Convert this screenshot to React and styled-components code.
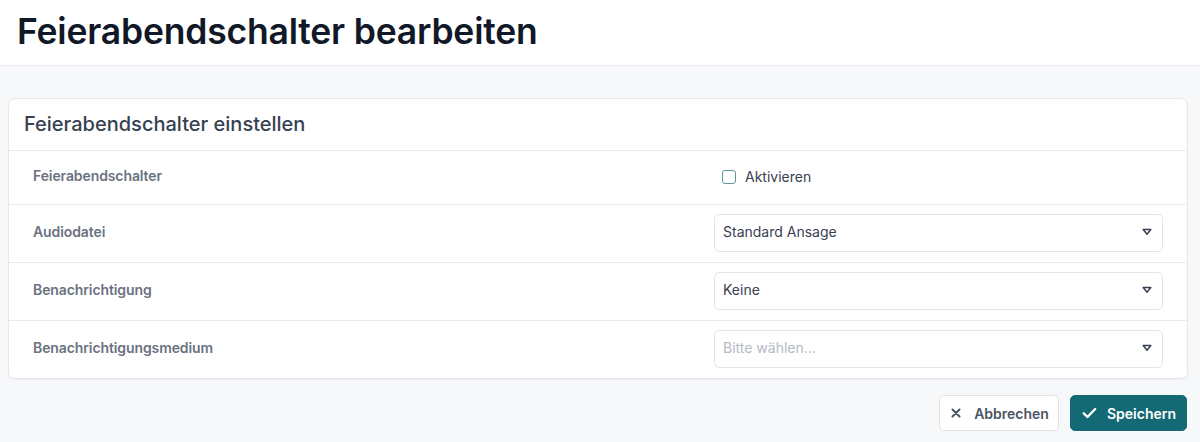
import React from 'react';
import styled, { createGlobalStyle } from 'styled-components';

const GlobalStyle = createGlobalStyle`
  html, body {
    margin: 0;
    padding: 0;
    background: #f7f8fa;
    font-family: Inter, "Noto Sans", Arial, sans-serif;
    color: #111827;
  }
  * { box-sizing: border-box; }
`;

const PageHeader = styled.header`
  height: 66px;
  background: #fff;
  border-bottom: 1px solid #e8eaee;
  padding: 0 0 3px 17px;
  display: flex;
  align-items: center;
`;

const PageTitle = styled.h1`
  margin: 0;
  font-size: 35.5px;
  font-weight: 600;
  letter-spacing: -0.2px;
  color: #111827;
`;

const Main = styled.main`
  padding: 32px 12px 12px 8px;
`;

const Card = styled.section`
  background: #fff;
  border: 1px solid #e5e7eb;
  border-radius: 7px;
  box-shadow: 0 1px 2px rgba(17, 24, 39, 0.04);
`;

const CardHeader = styled.div`
  height: 52px;
  padding: 0 15px 2px;
  display: flex;
  align-items: center;
  border-bottom: 1px solid #e8eaee;
`;

const CardTitle = styled.h2`
  margin: 0;
  font-size: 20px;
  font-weight: 500;
  color: #374151;
`;

const Row = styled.div`
  display: grid;
  grid-template-columns: 1fr 449px;
  align-items: center;
  padding: ${(p) => (p.$compact ? '0 24px' : '9px 24px 10px')};
  min-height: ${(p) => (p.$compact ? '53px' : '57px')};
  & + & {
    border-top: 1px solid #e8eaee;
  }
`;

const Label = styled.span`
  padding-bottom: 4px;
  font-size: 14px;
  font-weight: 600;
  letter-spacing: -0.1px;
  color: #6b7280;
`;

const CheckLabel = styled.label`
  display: flex;
  align-items: center;
  gap: 9px;
  padding: 0 0 2px 8px;
  font-size: 14px;
  color: #374151;
`;

const CheckBox = styled.span`
  width: 14px;
  height: 14px;
  border: 1.5px solid #5f979f;
  border-radius: 3px;
  background: #fff;
`;

const Select = styled.div`
  height: 38px;
  border: 1px solid #e2e4e8;
  border-radius: 5px;
  display: flex;
  align-items: center;
  justify-content: space-between;
  padding: 0 10px 3px 8px;
  font-size: 14px;
  color: ${(p) => (p.$placeholder ? '#b5bac3' : '#374151')};
  background: #fff;
`;

const Actions = styled.div`
  display: flex;
  justify-content: flex-end;
  gap: 11px;
  padding: 16px 1px 0 0;
`;

const Button = styled.button`
  height: 36px;
  display: flex;
  align-items: center;
  gap: ${(p) => (p.$primary ? '10px' : '13px')};
  padding: 0 ${(p) => (p.$primary ? '10px' : '9px')} 0 11px;
  border-radius: 5px;
  font-family: inherit;
  font-size: 14px;
  font-weight: 600;
  border: 1px solid ${(p) => (p.$primary ? '#136a74' : '#dfe2e6')};
  background: ${(p) => (p.$primary ? '#136a74' : '#fff')};
  color: ${(p) => (p.$primary ? '#fff' : '#4b5563')};
  cursor: pointer;
`;

const Caret = () => (
  <svg width="10" height="8" viewBox="0 0 10 8">
    <path d="M1.2 1.6 L8.8 1.6 L5 6.2 Z" fill="none" stroke="#374151" strokeWidth="1.5" strokeLinejoin="round" />
  </svg>
);

const XIcon = () => (
  <svg width="10" height="10" viewBox="0 0 10 10">
    <path d="M1.5 1.5 L8.5 8.5 M8.5 1.5 L1.5 8.5" stroke="#4b5563" strokeWidth="2" strokeLinecap="round" />
  </svg>
);

const CheckIcon = () => (
  <svg width="15" height="12" viewBox="0 0 15 12">
    <path d="M1.8 6.3 L5.5 10 L13.2 2" fill="none" stroke="#fff" strokeWidth="2.4" strokeLinecap="round" strokeLinejoin="round" />
  </svg>
);

const selects = [
  { label: 'Audiodatei', value: 'Standard Ansage' },
  { label: 'Benachrichtigung', value: 'Keine' },
  { label: 'Benachrichtigungsmedium', value: 'Bitte wählen...', placeholder: true },
];

export default function App() {
  return (
    <>
      <GlobalStyle />
      <PageHeader>
        <PageTitle>Feierabendschalter bearbeiten</PageTitle>
      </PageHeader>
      <Main>
        <Card>
          <CardHeader>
            <CardTitle>Feierabendschalter einstellen</CardTitle>
          </CardHeader>
          <Row $compact>
            <Label>Feierabendschalter</Label>
            <CheckLabel>
              <CheckBox />
              Aktivieren
            </CheckLabel>
          </Row>
          {selects.map((s) => (
            <Row key={s.label}>
              <Label>{s.label}</Label>
              <Select $placeholder={s.placeholder}>
                {s.value}
                <Caret />
              </Select>
            </Row>
          ))}
        </Card>
        <Actions>
          <Button>
            <XIcon />
            Abbrechen
          </Button>
          <Button $primary>
            <CheckIcon />
            Speichern
          </Button>
        </Actions>
      </Main>
    </>
  );
}
